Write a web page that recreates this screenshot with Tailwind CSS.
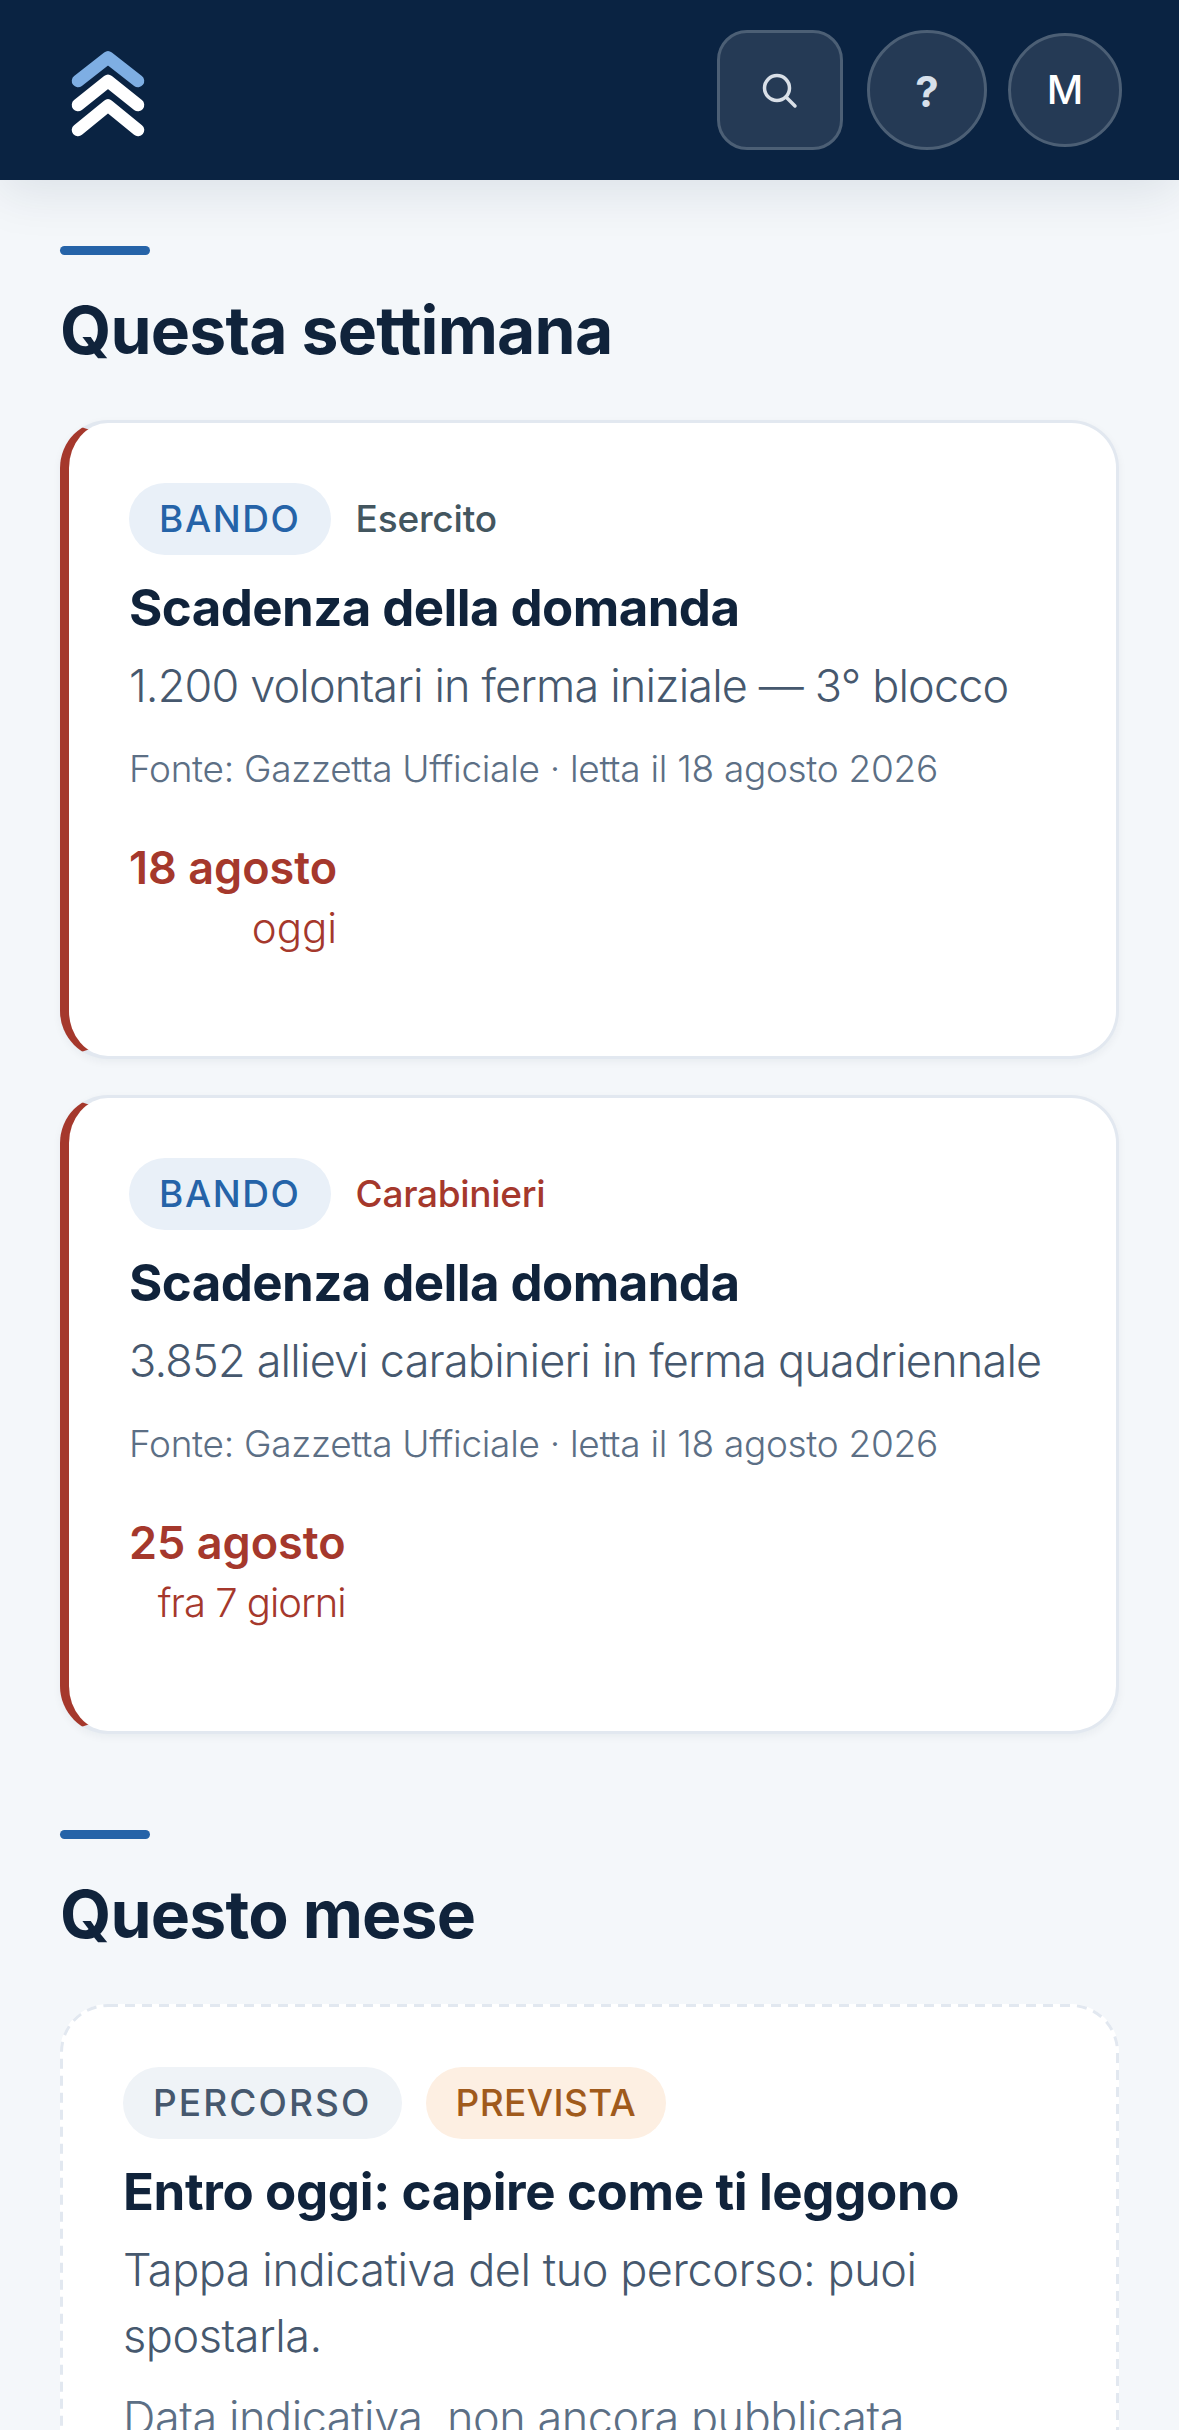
<!doctype html>
<html lang="it"><head><meta charset="utf-8"><script src="https://cdn.jsdelivr.net/npm/@tailwindcss/browser@4"></script></head>
<body class="m-0">
<div class="w-[1179px] h-[2430px] overflow-hidden bg-[#f4f7fa] font-['Inter','Liberation_Sans',sans-serif] text-[#10233b]">
<header class="relative z-10 h-[180px] bg-[#0a2342] shadow-[0_12px_48px_rgba(10,35,66,0.1)] flex items-center justify-between pl-[60px] pr-[57px]">
  <svg class="w-[96px] h-[96px]" viewBox="60 43 96 96" fill="none" stroke-width="12.500" stroke-linecap="round" stroke-linejoin="round"><path d="M78 82 108 58.500 138 82" stroke="#7eaee3"/><path d="M78 106 108 82 138 106" stroke="#fff"/><path d="M78 131 108 106.500 138 131" stroke="#fff"/></svg>
  <div class="flex items-center">
    <div class="w-[126px] h-[120px] rounded-[30px] border-[3px] border-[#4c5f75] bg-[#253a55] flex items-center justify-center">
      <svg class="w-[42px] h-[42px]" viewBox="0 0 42 42" fill="none" stroke="#d9dfe7" stroke-width="3.500" stroke-linecap="round"><circle cx="18" cy="19" r="12.500"/><path d="M27.500 28.500 36 37"/></svg>
    </div>
    <div class="ml-[24px] w-[120px] h-[120px] rounded-full border-[3px] border-[#4c5f75] bg-[#253a55] flex items-center justify-center pt-[2px] text-[42px] font-bold text-[#d7e0eb]">?</div>
    <div class="ml-[21px] w-[114px] h-[114px] rounded-full border-[3px] border-[#4c5f75] bg-[#253a55] flex items-center justify-center text-[40px] font-medium text-white">M</div>
  </div>
</header>
<main class="px-[60px]">
  <section class="pt-[66px]">
    <div class="w-[90px] h-[9px] rounded-full bg-[#2563a8]"></div>
    <h2 class="mt-[35px] text-[66px] leading-[80px] font-bold tracking-[-0.8px]">Questa settimana</h2>
  </section>
  <article class="mt-[50px] h-[639px] rounded-[48px] border-[3px] border-l-[9px] border-[#e2e8f0] border-l-[#a5382c] bg-white shadow-[0_3px_9px_rgba(10,35,66,0.05)] pt-[60px] pl-[60px]">
    <div class="flex items-center gap-[25px]"><span class="h-[72px] px-[30px] rounded-full bg-[#e9f0f8] text-[#2563a8] text-[37px] font-medium tracking-[1.6px] flex items-center">BANDO</span><span class="text-[37px] font-medium tracking-[-0.2px] text-[#43565f]">Esercito</span></div>
    <h3 class="mt-[20px] text-[51px] leading-[66px] font-bold tracking-[-0.6px]">Scadenza della domanda</h3>
    <p class="mt-[11px] text-[45px] leading-[68px] font-[350] tracking-[-0.85px] text-[#46586e]">1.200 volontari in ferma iniziale — 3° blocco</p>
    <p class="mt-[24px] text-[37px] leading-[50px] font-[350] tracking-[-0.3px] text-[#5c6f85]">Fonte: Gazzetta Ufficiale · letta il 18 agosto 2026</p>
    <div class="mt-[44px] w-fit text-right text-[#a5382c]"><div class="text-[45px] leading-[60px] font-semibold">18 agosto</div><div class="mt-[1px] text-[42px] leading-[58px] font-[350]">oggi</div></div>
  </article>
  <article class="mt-[36px] h-[639px] rounded-[48px] border-[3px] border-l-[9px] border-[#e2e8f0] border-l-[#a5382c] bg-white shadow-[0_3px_9px_rgba(10,35,66,0.05)] pt-[60px] pl-[60px]">
    <div class="flex items-center gap-[25px]"><span class="h-[72px] px-[30px] rounded-full bg-[#e9f0f8] text-[#2563a8] text-[37px] font-medium tracking-[1.6px] flex items-center">BANDO</span><span class="text-[37px] font-medium tracking-[-0.3px] text-[#a5382c]">Carabinieri</span></div>
    <h3 class="mt-[20px] text-[51px] leading-[66px] font-bold tracking-[-0.6px]">Scadenza della domanda</h3>
    <p class="mt-[11px] text-[45px] leading-[68px] font-[350] tracking-[-0.8px] text-[#46586e]">3.852 allievi carabinieri in ferma quadriennale</p>
    <p class="mt-[24px] text-[37px] leading-[50px] font-[350] tracking-[-0.3px] text-[#5c6f85]">Fonte: Gazzetta Ufficiale · letta il 18 agosto 2026</p>
    <div class="mt-[44px] w-fit text-right text-[#a5382c]"><div class="text-[45px] leading-[60px] font-semibold">25 agosto</div><div class="mt-[1px] text-[40px] leading-[58px] font-[350] tracking-[-1px]">fra 7 giorni</div></div>
  </article>
  <section class="pt-[96px]">
    <div class="w-[90px] h-[9px] rounded-full bg-[#2563a8]"></div>
    <h2 class="mt-[35px] text-[66px] leading-[80px] font-bold tracking-[-0.8px]">Questo mese</h2>
  </section>
  <article class="relative mt-[50px] h-[800px] rounded-[48px] border-[3px] border-transparent bg-white pt-[60px] pl-[60px] pr-[60px]">
    <svg class="absolute -left-[3px] -top-[3px] w-[1059px] h-[800px]" viewBox="0 0 1059 800" fill="none"><rect x="1.500" y="1.500" width="1056" height="797" rx="46.500" stroke="#e2e8f0" stroke-width="3" stroke-dasharray="10 7"/></svg>
    <div class="flex items-center gap-[24px]"><span class="h-[72px] px-[30px] rounded-full bg-[#eff3f7] text-[#46586e] text-[37px] font-medium tracking-[2.1px] flex items-center">PERCORSO</span><span class="h-[72px] px-[30px] rounded-full bg-[#fdefe2] text-[#a05a1c] text-[37px] font-medium tracking-[0.4px] flex items-center">PREVISTA</span></div>
    <h3 class="mt-[20px] text-[51px] leading-[66px] font-bold tracking-[-0.37px]">Entro oggi: capire come ti leggono</h3>
    <p class="mt-[12px] text-[45px] leading-[66px] font-[350] tracking-[-0.45px] text-[#46586e]">Tappa indicativa del tuo percorso: puoi spostarla.</p>
    <p class="mt-[16px] text-[45px] leading-[66px] font-[350] tracking-[-0.45px] text-[#5c6f85]">Data indicativa, non ancora pubblicata</p>
  </article>
</main>
</div>
</body></html>
